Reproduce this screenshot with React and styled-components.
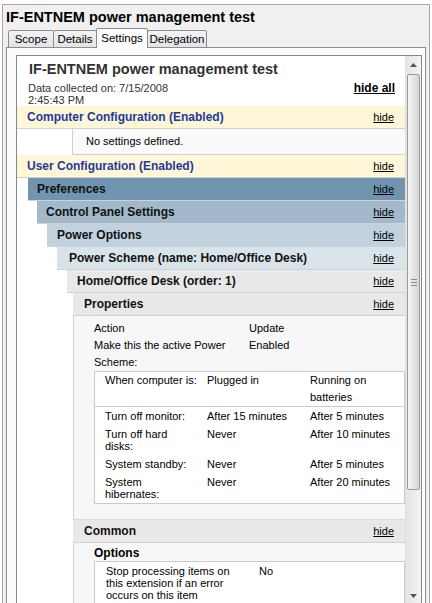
import { Fragment } from 'react';
import styled, { createGlobalStyle } from 'styled-components';

const GlobalStyle = createGlobalStyle`
  html, body {
    margin: 0;
    padding: 0;
    background: #fff;
  }
  body {
    font-family: "Liberation Sans", Arial, sans-serif;
    font-size: 11px;
    color: #000;
  }
  #root {
    width: 432px;
    height: 603px;
    overflow: hidden;
  }
`;

const Window = styled.div`
  box-sizing: border-box;
  width: 428px;
  height: 640px;
  margin: 4px 0 0 2px;
  padding: 0 3px;
  border: 1px solid #a7a7a7;
  background: #f0f0f0;
`;

const WindowTitle = styled.div`
  height: 22px;
  padding-top: 1px;
  line-height: 22px;
  font-size: 14.5px;
  font-weight: bold;
`;

const TabRow = styled.div`
  display: flex;
  align-items: flex-end;
  height: 20px;
  padding-left: 2px;
  margin-bottom: -1px;
`;

const Tab = styled.div`
  position: relative;
  z-index: ${p => (p.$active ? 1 : 0)};
  box-sizing: border-box;
  display: flex;
  align-items: center;
  justify-content: center;
  width: ${p => p.$width}px;
  height: ${p => (p.$active ? 20 : 18)}px;
  margin-left: -1px;
  padding-bottom: ${p => (p.$active ? 2 : 0)}px;
  border: 1px solid #898c95;
  border-bottom: ${p => (p.$active ? 'none' : '1px solid #898c95')};
  border-radius: 2px 2px 0 0;
  background: ${p => (p.$active ? '#fcfcfc' : 'linear-gradient(#f3f3f3, #e4e4e4)')};
  font-size: 11.5px;
  &:first-child {
    margin-left: 0;
  }
`;

const TabPanel = styled.div`
  box-sizing: border-box;
  height: 600px;
  padding: 7px 3px 0 9px;
  border: 1px solid #898c95;
  background: #fcfcfc;
`;

const ReportFrame = styled.div`
  box-sizing: border-box;
  display: flex;
  height: 550px;
  border: 1px solid #828790;
  background: #fff;
`;

const Report = styled.div`
  width: 388px;
  overflow: hidden;
`;

const ReportHead = styled.div`
  padding: 5px 10px 0 11px;
  color: #333;
`;

const ReportTitle = styled.div`
  margin-bottom: 4px;
  padding-left: 1px;
  font-size: 14.5px;
  line-height: 17px;
  font-weight: bold;
`;

const DateRow = styled.div`
  display: flex;
  justify-content: space-between;
  align-items: flex-start;
  line-height: 12px;
`;

const HideAll = styled.a`
  color: #000;
  font-size: 12px;
  font-weight: bold;
  text-decoration: underline;
`;

const tones = {
  config: { bg: '#fdf6d7', ink: '#1f3a9c' },
  l1: { bg: '#7194b0', ink: '#111' },
  l2: { bg: '#a1b9ca', ink: '#111' },
  l3: { bg: '#c1d2de', ink: '#111' },
  l4: { bg: '#d9e3ea', ink: '#111' },
  l5: { bg: '#e8e8e8', ink: '#111' },
};

const Header = styled.div`
  display: flex;
  align-items: center;
  justify-content: space-between;
  height: 22px;
  padding: 0 11px 0 ${p => p.$pad}px;
  border-bottom: 1px solid #d2d2d2;
  background: ${p => tones[p.$tone].bg};
  color: ${p => tones[p.$tone].ink};
  font-size: 12px;
  font-weight: bold;
`;

const Hide = styled.a`
  color: #000;
  font-size: 11px;
  font-weight: normal;
  text-decoration: underline;
`;

const Nest = styled.div`
  margin-left: ${p => p.$indent}px;
`;

const EmptyNote = styled.div`
  height: 25px;
  margin-left: 55px;
  padding-left: 13px;
  line-height: 25px;
  border-left: 1px solid #d0d0d0;
  border-bottom: 1px solid #d0d0d0;
  background: #fafafa;
`;

const SectionBody = styled.div`
  padding: ${p => p.$top}px 0 ${p => p.$bottom}px 20px;
  border-left: 1px solid #d0d0d0;
  border-bottom: ${p => (p.$bottom ? '1px solid #dcdcdc' : 'none')};
  background: #f7f7f7;
`;

const KeyValues = styled.div`
  display: grid;
  grid-template-columns: 155px 1fr;
  line-height: 17px;
  white-space: pre-line;
`;

const Table = styled.div`
  border: 1px solid #cbcbcb;
  background: #fff;
`;

const TableRow = styled.div`
  display: grid;
  grid-template-columns: ${p => p.$cols};
  padding: ${p => (p.$head ? '0' : '3px')} 0 ${p => (p.$head ? '0' : '3px')} ${p => p.$indent}px;
  line-height: ${p => (p.$head ? 17 : 12)}px;
  border-bottom: ${p => (p.$head ? '1px solid #cbcbcb' : 'none')};
  white-space: pre-line;
`;

const SubTitle = styled.div`
  font-size: 12px;
  font-weight: bold;
  line-height: 16px;
`;

const ScrollTrack = styled.div`
  display: flex;
  flex-direction: column;
  width: 16px;
  background: linear-gradient(to right, #e4e4e4, #f4f4f4);
  box-shadow: inset 1px 0 #dedede;
`;

const ScrollButton = styled.div`
  display: flex;
  align-items: center;
  justify-content: center;
  height: 17px;
  margin-top: ${p => (p.$end ? 'auto' : '0')};
`;

const Thumb = styled.div`
  box-sizing: border-box;
  display: flex;
  align-items: center;
  justify-content: center;
  height: 416px;
  margin: 1px 1px 0 2px;
  border: 1px solid #9b9b9b;
  border-radius: 2px;
  background: linear-gradient(to right, #f5f5f5, #e2e2e2 60%, #d6d6d6);
`;

const Grip = styled.div`
  width: 6px;
  height: 5px;
  border-top: 1px solid #8a8a8a;
  border-bottom: 1px solid #8a8a8a;
  background: linear-gradient(transparent 2px, #8a8a8a 2px, #8a8a8a 3px, transparent 3px);
`;

const tabs = [
  { label: 'Scope', width: 46 },
  { label: 'Details', width: 44 },
  { label: 'Settings', width: 52, active: true },
  { label: 'Delegation', width: 60 },
];

const properties = [
  ['Action', 'Update'],
  ['Make this the active Power\nScheme:', 'Enabled'],
];

const powerHead = ['When computer is:', 'Plugged in', 'Running on\nbatteries'];

const powerRows = [
  ['Turn off monitor:', 'After 15 minutes', 'After 5 minutes'],
  ['Turn off hard\ndisks:', 'Never', 'After 10 minutes'],
  ['System standby:', 'Never', 'After 5 minutes'],
  ['System\nhibernates:', 'Never', 'After 20 minutes'],
];

function Section({ title, tone, pad, children }) {
  return (
    <>
      <Header $tone={tone} $pad={pad}>
        <span>{title}</span>
        <Hide>hide</Hide>
      </Header>
      {children}
    </>
  );
}

function Arrow({ up }) {
  return (
    <svg width="7" height="4" viewBox="0 0 7 4">
      <path d={up ? 'M0 4 L3.5 0 L7 4 Z' : 'M0 0 L3.5 4 L7 0 Z'} fill="#555" />
    </svg>
  );
}

export default function App() {
  const powerCols = '102px 103px 1fr';
  return (
    <>
      <GlobalStyle />
      <Window>
        <WindowTitle>IF-ENTNEM power management test</WindowTitle>
        <TabRow>
          {tabs.map(t => (
            <Tab key={t.label} $width={t.width} $active={t.active}>{t.label}</Tab>
          ))}
        </TabRow>
        <TabPanel>
          <ReportFrame>
            <Report>
              <ReportHead>
                <ReportTitle>IF-ENTNEM power management test</ReportTitle>
                <DateRow>
                  <div>
                    <div>Data collected on: 7/15/2008</div>
                    <div>2:45:43 PM</div>
                  </div>
                  <HideAll>hide all</HideAll>
                </DateRow>
              </ReportHead>

              <Section title="Computer Configuration (Enabled)" tone="config" pad={10}>
                <EmptyNote>No settings defined.</EmptyNote>
              </Section>

              <Section title="User Configuration (Enabled)" tone="config" pad={10}>
                <Nest $indent={11}>
                  <Section title="Preferences" tone="l1" pad={9}>
                    <Nest $indent={9}>
                      <Section title="Control Panel Settings" tone="l2" pad={9}>
                        <Nest $indent={10}>
                          <Section title="Power Options" tone="l3" pad={10}>
                            <Nest $indent={10}>
                              <Section title="Power Scheme (name: Home/Office Desk)" tone="l4" pad={12}>
                                <Nest $indent={10}>
                                  <Section title="Home/Office Desk (order: 1)" tone="l5" pad={10}>
                                    <Nest $indent={6}>
                                      <Section title="Properties" tone="l5" pad={11}>
                                        <SectionBody $top={4} $bottom={15}>
                                          <KeyValues>
                                            {properties.map(([k, v]) => (
                                              <Fragment key={k}>
                                                <span>{k}</span>
                                                <span>{v}</span>
                                              </Fragment>
                                            ))}
                                          </KeyValues>
                                          <Table>
                                            <TableRow $head $cols={powerCols} $indent={10}>
                                              {powerHead.map(c => <span key={c}>{c}</span>)}
                                            </TableRow>
                                            {powerRows.map(row => (
                                              <TableRow key={row[0]} $cols={powerCols} $indent={10}>
                                                {row.map((c, i) => <span key={i}>{c}</span>)}
                                              </TableRow>
                                            ))}
                                          </Table>
                                        </SectionBody>
                                      </Section>
                                      <Section title="Common" tone="l5" pad={11}>
                                        <SectionBody $top={2} $bottom={0}>
                                          <SubTitle>Options</SubTitle>
                                          <Table>
                                            <TableRow $cols="153px 1fr" $indent={11}>
                                              <span>{'Stop processing items on\nthis extension if an error\noccurs on this item'}</span>
                                              <span>No</span>
                                            </TableRow>
                                          </Table>
                                        </SectionBody>
                                      </Section>
                                    </Nest>
                                  </Section>
                                </Nest>
                              </Section>
                            </Nest>
                          </Section>
                        </Nest>
                      </Section>
                    </Nest>
                  </Section>
                </Nest>
              </Section>
            </Report>
            <ScrollTrack>
              <ScrollButton><Arrow up /></ScrollButton>
              <Thumb><Grip /></Thumb>
              <ScrollButton $end><Arrow /></ScrollButton>
            </ScrollTrack>
          </ReportFrame>
        </TabPanel>
      </Window>
    </>
  );
}
